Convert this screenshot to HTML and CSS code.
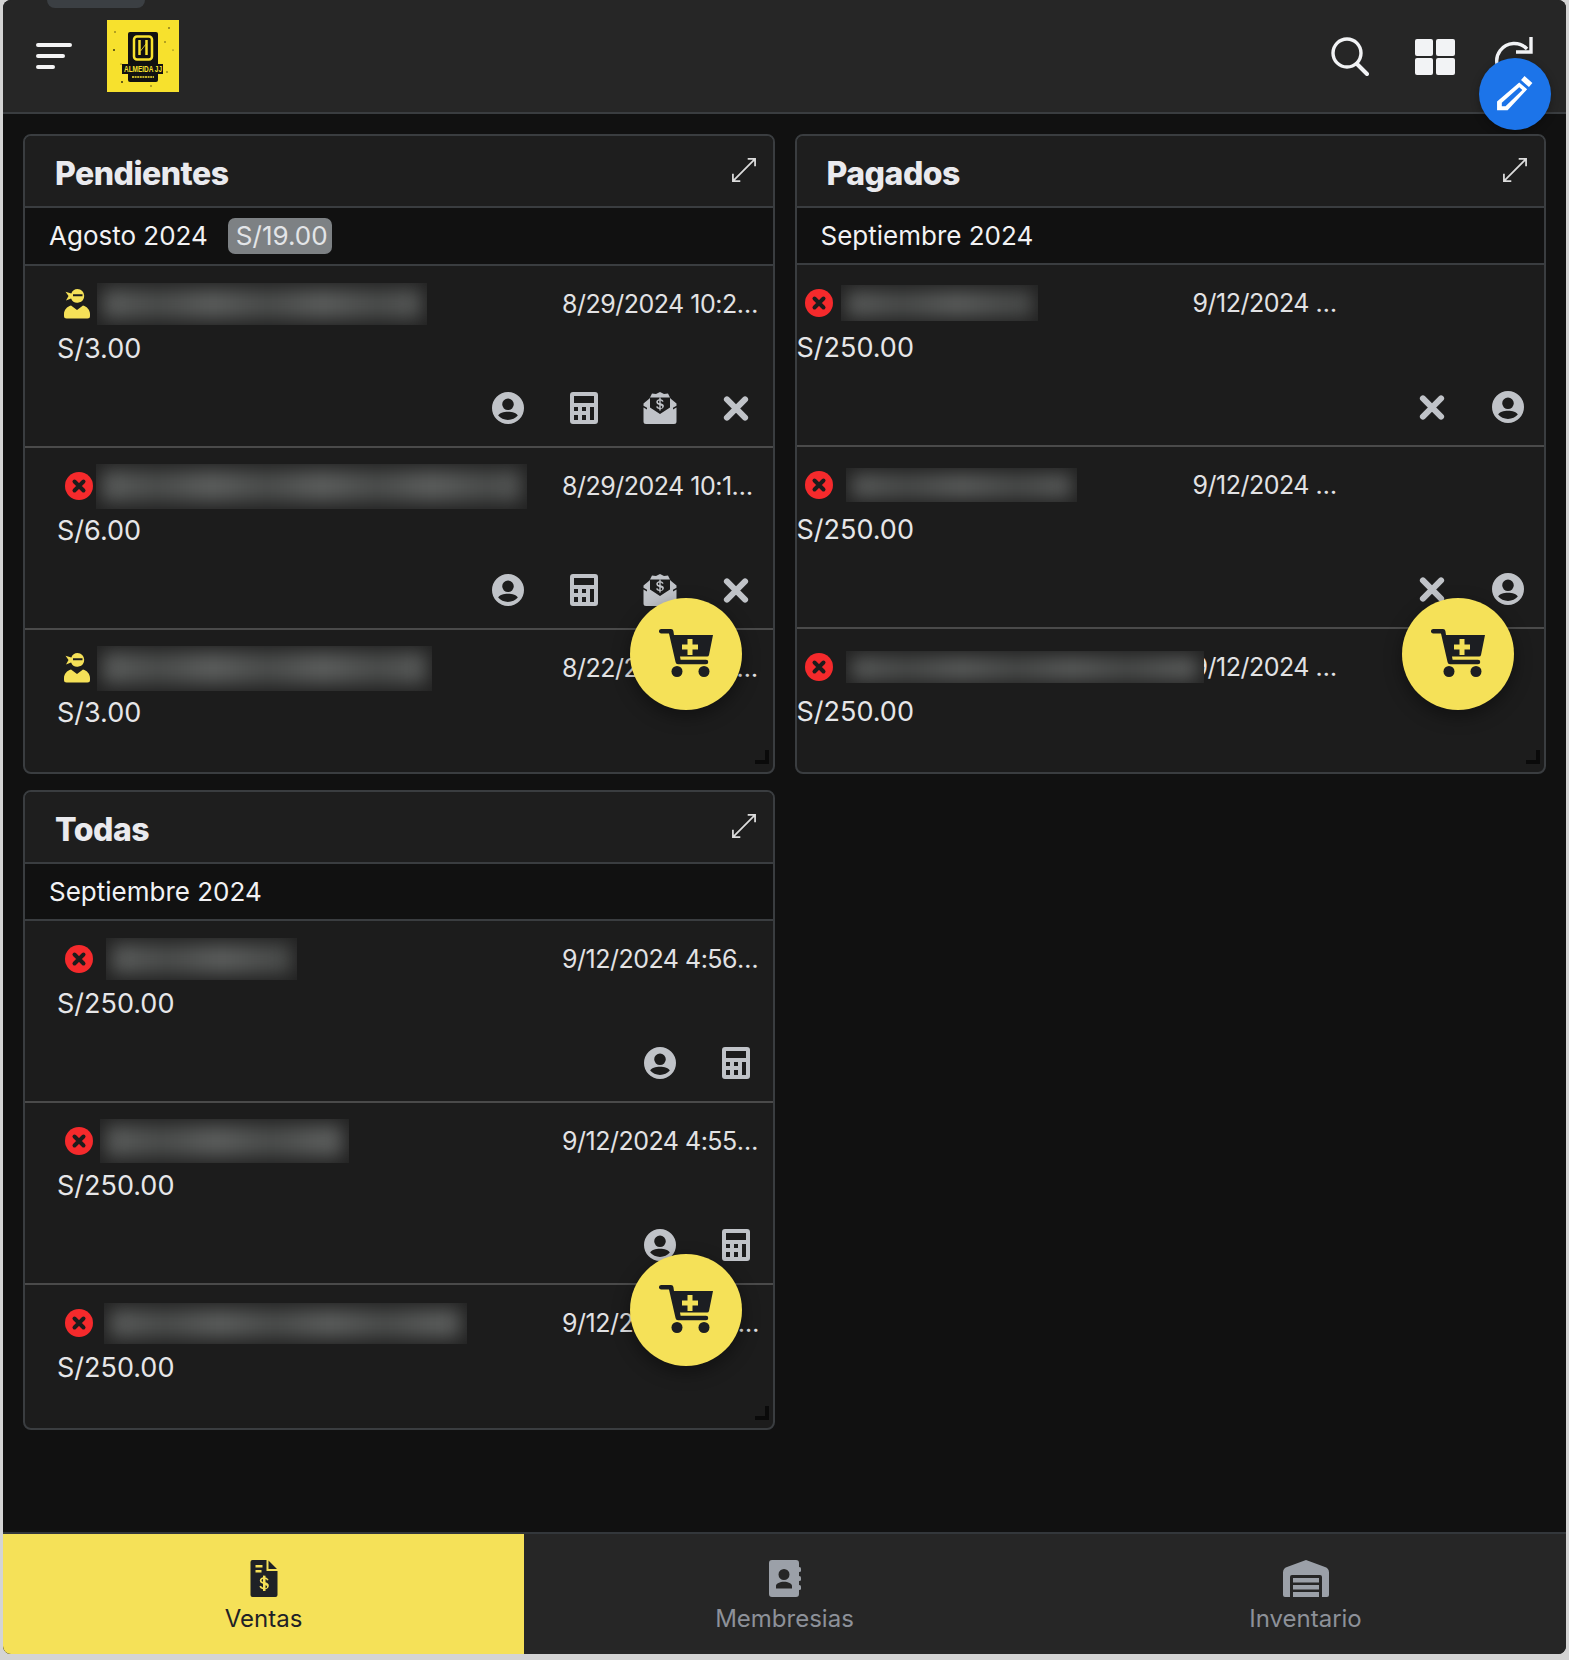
FILE: index.html
```html
<!DOCTYPE html>
<html lang="es">
<head>
  <meta charset="UTF-8" />
  <meta name="viewport" content="width=device-width, initial-scale=1.0"/>
  <title>Almeida JJ - Ventas</title>
  <link rel="stylesheet" href="styles.css">
</head>
<body>

<!-- shared icons -->
<svg class="defs" width="0" height="0">
  <symbol id="i-person" viewBox="0 0 32 32">
    <path fill-rule="evenodd" d="M16 0a16 16 0 1 0 0 32a16 16 0 0 0 0-32zM16 6.500a5.800 5.800 0 1 1 0 11.600a5.800 5.800 0 0 1 0-11.600zM16 28c-4 0-7.600-1.700-9.800-4.400c.8-2.300 5.500-3.800 9.800-3.800s9 1.500 9.800 3.800C23.600 26.300 20 28 16 28z"/>
  </symbol>
  <symbol id="i-calc" viewBox="0 0 28 32">
    <path fill-rule="evenodd" d="M3 0h22a3 3 0 0 1 3 3v26a3 3 0 0 1-3 3H3a3 3 0 0 1-3-3V3a3 3 0 0 1 3-3zM4 4v7h20V4zM4 15v4h4v-4zM12 15v4h4v-4zM20 15v13h4V15zM4 23v5h4v-5zM12 23v5h4v-5z"/>
  </symbol>
  <symbol id="i-cash" viewBox="0 0 33 32">
    <path fill-rule="evenodd" d="M8.500 1.500L12.500 2L16.500 0L20.500 2L24.500 1.500L27 6.500L33 11.500V29.500A2.500 2.500 0 0 1 30.500 32H2.500A2.500 2.500 0 0 1 0 29.500V11.500L6 6.500zM6.500 5.500V15.500L16.500 22L26.500 15.500V5.500zM15.800 5.800v1.500c-1.900.3-3 1.300-3 2.800c0 1.700 1.300 2.400 3 2.800v2.800c-.9-.2-1.500-.7-1.700-1.500l-1.500.4c.3 1.400 1.500 2.300 3.200 2.500v1.500h1.400v-1.500c2-.3 3.200-1.400 3.200-3c0-1.700-1.300-2.500-3.200-2.900V8.600c.7.100 1.200.6 1.400 1.200l1.500-.4c-.3-1.200-1.400-2-2.900-2.200V5.800zM15.800 8.600v2.500c-.9-.3-1.400-.6-1.400-1.200s.5-1.100 1.400-1.300zM17.200 13.500c1 .3 1.600.7 1.600 1.400s-.6 1.200-1.600 1.300zM0 13.800V15.500L3.500 17.500V15.800zM33 13.800V15.500L29.500 17.500V15.800z"/>
  </symbol>
  <symbol id="i-close" viewBox="0 0 24 24">
    <path d="M4.500 4.500L19.500 19.500M19.500 4.500L4.500 19.500" fill="none" stroke="currentColor" stroke-width="5" stroke-linecap="round"/>
  </symbol>
  <symbol id="i-cancel" viewBox="0 0 28 28">
    <circle cx="14" cy="14" r="14" fill="#f52a2c"/>
    <path d="M9.500 9.500L18.500 18.500M18.500 9.500L9.500 18.500" fill="none" stroke="#1c1c1c" stroke-width="4" stroke-linecap="round"/>
  </symbol>
  <symbol id="i-ninja" viewBox="0 0 26 30">
    <path fill-rule="evenodd" d="M13.500 0a6.800 6.800 0 0 1 6.700 6.800a6.800 6.800 0 0 1-13.100 2.600L2 11.500L4.500 7L1.500 2.800L7.300 4.400A6.800 6.800 0 0 1 13.500 0zM9 5.300v2h9.500v-2z"/>
    <path d="M7 16.500L13 21L19 16.500C23 17.500 26 21 26 25V27a2.500 2.500 0 0 1-2.500 2.500H2.500A2.500 2.500 0 0 1 0 27V25C0 21 3 17.500 7 16.500z"/>
  </symbol>
  <symbol id="i-expand" viewBox="0 0 26 26">
    <path d="M25 1L1 25M17 1H25V9M1 17V25H9" fill="none" stroke="currentColor" stroke-width="1.900"/>
  </symbol>
  <symbol id="i-cart" viewBox="0 0 54 50">
    <path fill-rule="evenodd" d="M2.200 0H12a2.500 2.500 0 0 1 2.400 2L15 6H54L50 26a2 2 0 0 1-2 1.500H21L21.600 30.700H47a2.250 2.250 0 0 1 0 4.500H19a2.500 2.500 0 0 1-2.400-2L10 4.500H2.200a2.250 2.250 0 0 1 0-4.500zM28.500 10v5.500H23v5h5.500v5.500h5v-5.500H39v-5h-5.500V10z"/>
    <circle cx="18" cy="42.500" r="5.500"/>
    <circle cx="45" cy="42.500" r="5.500"/>
  </symbol>
</svg>

<div class="app">

  <div class="notch"></div>

  <nav class="topbar">
    <svg class="menu-icon" viewBox="0 0 36 26">
      <path d="M2 2H34M2 13H27M2 24H17" fill="none" stroke="#f4f4f5" stroke-width="4" stroke-linecap="round"/>
    </svg>
    <svg class="logo" viewBox="0 0 72 72">
      <rect width="72" height="72" fill="#f7e12d"/>
      <g fill="#3a3410">
        <circle cx="8" cy="12" r=".7"/><circle cx="62" cy="8" r=".8"/><circle cx="7" cy="30" r="1"/>
        <circle cx="15" cy="62" r="1"/><circle cx="60" cy="52" r=".7"/><circle cx="66" cy="30" r=".6"/>
        <circle cx="14" cy="44" r=".6"/><circle cx="44" cy="66" r=".7"/><circle cx="58" cy="22" r=".7"/>
      </g>
      <rect x="21" y="12" width="30" height="50" rx="2" fill="#111"/>
      <rect x="27" y="16.500" width="18" height="23" rx="3" fill="none" stroke="#f7e12d" stroke-width="2.500"/>
      <path d="M32.500 20V35M39.500 20V35" stroke="#f7e12d" stroke-width="2.500"/>
      <path d="M33.500 31L39 24" stroke="#f7e12d" stroke-width=".8"/>
      <rect x="15" y="44" width="41" height="10" fill="#111"/>
      <text class="logo-text" x="36" y="52" textLength="38" lengthAdjust="spacingAndGlyphs">ALMEIDA JJ</text>
      <path d="M25 57H47" stroke="#f7e12d" stroke-width="1.500" stroke-dasharray="2 .6"/>
    </svg>
    <div class="topbar-actions">
      <svg class="tool search" viewBox="0 0 38 40">
        <circle cx="16" cy="16" r="14" fill="none" stroke="#f2f3f5" stroke-width="3.400"/>
        <path d="M26 27L36 37" stroke="#f2f3f5" stroke-width="4" stroke-linecap="round"/>
      </svg>
      <div class="grid-icon">
        <span></span><span></span><span></span><span></span>
      </div>
      <svg class="tool refresh" viewBox="0 0 40 40">
        <path d="M33 13A17.500 17.500 0 1 0 37 30" fill="none" stroke="#f2f3f5" stroke-width="3.400"/>
        <path d="M37 1V16H22" fill="none" stroke="#f2f3f5" stroke-width="3.400"/>
      </svg>
    </div>
  </nav>

  <button class="fab-edit">
    <svg viewBox="0 0 36 36"><path fill-rule="evenodd" d="M27 1l7.500 6.500l-3.300 3.800l-7.500-6.500zM22 7l7.500 6.500L11 33.500H1V25zM22 11.500L5.500 26.200v3.300h3.500L25 14.200z" fill="#fff"/></svg>
  </button>

  <main class="board">

    <!-- Pendientes -->
    <section class="card">
      <header class="card-head">
        <h2>Pendientes</h2>
        <svg class="expand"><use href="#i-expand"/></svg>
      </header>
      <div class="month">Agosto 2024 <span class="pill">S/19.00</span></div>
      <div class="list">
        <article class="sale">
          <div class="sale-top">
            <span class="status"><svg class="ninja"><use href="#i-ninja"/></svg></span>
            <span class="name"><span class="smear" style="width:330px;height:42px;margin-left:24px"><i></i></span></span>
            <span class="date">8/29/2024 10:29:14 PM</span>
          </div>
          <p class="amount">S/3.00</p>
          <div class="actions">
            <svg class="act person"><use href="#i-person"/></svg>
            <svg class="act calc"><use href="#i-calc"/></svg>
            <svg class="act cash"><use href="#i-cash"/></svg>
            <svg class="act close"><use href="#i-close"/></svg>
          </div>
        </article>
        <article class="sale">
          <div class="sale-top">
            <span class="status"><svg class="cancel"><use href="#i-cancel"/></svg></span>
            <span class="name"><span class="smear" style="width:431px;height:45px;margin-left:23px"><i></i></span></span>
            <span class="date">8/29/2024 10:19:05 PM</span>
          </div>
          <p class="amount">S/6.00</p>
          <div class="actions">
            <svg class="act person"><use href="#i-person"/></svg>
            <svg class="act calc"><use href="#i-calc"/></svg>
            <svg class="act cash"><use href="#i-cash"/></svg>
            <svg class="act close"><use href="#i-close"/></svg>
          </div>
        </article>
        <article class="sale">
          <div class="sale-top">
            <span class="status"><svg class="ninja"><use href="#i-ninja"/></svg></span>
            <span class="name"><span class="smear" style="width:335px;height:45px;margin-left:24px"><i></i></span></span>
            <span class="date">8/22/2024 10:29:14 PM</span>
          </div>
          <p class="amount">S/3.00</p>
        </article>
      </div>
      <button class="fab-cart"><svg><use href="#i-cart"/></svg></button>
      <span class="resize"></span>
    </section>

    <!-- Pagados -->
    <section class="card card-tight">
      <header class="card-head">
        <h2>Pagados</h2>
        <svg class="expand"><use href="#i-expand"/></svg>
      </header>
      <div class="month">Septiembre 2024</div>
      <div class="list">
        <article class="sale">
          <div class="sale-top">
            <span class="status"><svg class="cancel"><use href="#i-cancel"/></svg></span>
            <span class="name"><span class="smear" style="width:197px;height:36px"><i></i></span></span>
            <span class="date">9/12/2024 4:56:01 PM</span>
          </div>
          <p class="amount">S/250.00</p>
          <div class="actions">
            <svg class="act close"><use href="#i-close"/></svg>
            <svg class="act person"><use href="#i-person"/></svg>
          </div>
        </article>
        <article class="sale">
          <div class="sale-top">
            <span class="status"><svg class="cancel"><use href="#i-cancel"/></svg></span>
            <span class="name"><span class="smear" style="width:231px;height:34px;margin-left:5px"><i></i></span></span>
            <span class="date">9/12/2024 4:55:32 PM</span>
          </div>
          <p class="amount">S/250.00</p>
          <div class="actions">
            <svg class="act close"><use href="#i-close"/></svg>
            <svg class="act person"><use href="#i-person"/></svg>
          </div>
        </article>
        <article class="sale">
          <div class="sale-top">
            <span class="status"><svg class="cancel"><use href="#i-cancel"/></svg></span>
            <span class="name"><span class="smear" style="width:358px;height:32px;margin-left:5px"><i></i></span></span>
            <span class="date">9/12/2024 4:54:10 PM</span>
          </div>
          <p class="amount">S/250.00</p>
        </article>
      </div>
      <button class="fab-cart"><svg><use href="#i-cart"/></svg></button>
      <span class="resize"></span>
    </section>

    <!-- Todas -->
    <section class="card">
      <header class="card-head">
        <h2>Todas</h2>
        <svg class="expand"><use href="#i-expand"/></svg>
      </header>
      <div class="month">Septiembre 2024</div>
      <div class="list">
        <article class="sale">
          <div class="sale-top">
            <span class="status"><svg class="cancel"><use href="#i-cancel"/></svg></span>
            <span class="name"><span class="smear" style="width:191px;height:42px;margin-left:33px"><i></i></span></span>
            <span class="date">9/12/2024 4:56:01 PM</span>
          </div>
          <p class="amount">S/250.00</p>
          <div class="actions">
            <svg class="act person"><use href="#i-person"/></svg>
            <svg class="act calc"><use href="#i-calc"/></svg>
          </div>
        </article>
        <article class="sale">
          <div class="sale-top">
            <span class="status"><svg class="cancel"><use href="#i-cancel"/></svg></span>
            <span class="name"><span class="smear" style="width:249px;height:44px;margin-left:27px"><i></i></span></span>
            <span class="date">9/12/2024 4:55:32 PM</span>
          </div>
          <p class="amount">S/250.00</p>
          <div class="actions">
            <svg class="act person"><use href="#i-person"/></svg>
            <svg class="act calc"><use href="#i-calc"/></svg>
          </div>
        </article>
        <article class="sale">
          <div class="sale-top">
            <span class="status"><svg class="cancel"><use href="#i-cancel"/></svg></span>
            <span class="name"><span class="smear" style="width:363px;height:41px;margin-left:31px"><i></i></span></span>
            <span class="date">9/12/2024 4:54:10 PM</span>
          </div>
          <p class="amount">S/250.00</p>
        </article>
      </div>
      <button class="fab-cart"><svg><use href="#i-cart"/></svg></button>
      <span class="resize"></span>
    </section>

  </main>

  <footer class="tabs">
    <a class="tab active" href="#">
      <svg class="tab-icon" viewBox="0 0 27 37">
        <path fill-rule="evenodd" d="M2 0h14v11h11v24a2 2 0 0 1-2 2H2a2 2 0 0 1-2-2V2a2 2 0 0 1 2-2zM5 5v2.500h7V5zM5 10v2.500h6V10zM12.500 15.500v1.700c-2 .4-3.200 1.700-3.200 3.300c0 2 1.500 2.800 3.200 3.300v3.700c-1-.2-1.700-.8-2-1.700l-1.600.5c.4 1.600 1.700 2.600 3.600 2.900v1.800H15v-1.800c2.100-.4 3.300-1.700 3.300-3.500c0-2-1.500-2.900-3.300-3.400v-3.200c.8.200 1.300.7 1.500 1.400l1.600-.5c-.4-1.400-1.500-2.300-3.100-2.600v-1.700zM12.500 19v2.800c-1-.3-1.500-.7-1.500-1.400s.6-1.200 1.500-1.400zM15 25.200c1 .3 1.600.8 1.600 1.500s-.6 1.400-1.600 1.600zM18 .5L26.500 9H18z"/>
      </svg>
      Ventas
    </a>
    <a class="tab" href="#">
      <svg class="tab-icon" viewBox="0 0 32 37">
        <path fill-rule="evenodd" d="M3 0h24a3 3 0 0 1 3 3v31a3 3 0 0 1-3 3H3a3 3 0 0 1-3-3V3a3 3 0 0 1 3-3zM15 9a5.500 5.500 0 1 0 0 11a5.500 5.500 0 0 0 0-11zM7 28.500h16v-2.500c0-2.500-4-4.200-8-4.200s-8 1.700-8 4.200z"/>
        <rect x="29" y="7" width="3" height="5" rx="1.500"/><rect x="29" y="16" width="3" height="5" rx="1.500"/><rect x="29" y="25" width="3" height="5" rx="1.500"/>
      </svg>
      Membresias
    </a>
    <a class="tab" href="#">
      <svg class="tab-icon wide" viewBox="0 0 46 37">
        <path fill-rule="evenodd" d="M23 0L42 7a6 6 0 0 1 4 5.500V35a2 2 0 0 1-2 2H39V17a2 2 0 0 0-2-2H9a2 2 0 0 0-2 2V37H2a2 2 0 0 1-2-2V12.500A6 6 0 0 1 4 7z"/>
        <rect x="10" y="18" width="26" height="4.500"/><rect x="10" y="25" width="26" height="4.500"/><rect x="10" y="32" width="26" height="5"/>
      </svg>
      Inventario
    </a>
  </footer>

</div>

</body>
</html>
```

FILE: styles.css
```css
* { box-sizing: border-box; margin: 0; padding: 0; font-family: "Inter", "Liberation Sans", sans-serif; }
html, body { height: 100%; }
body { background-color: #d4d4d4; padding: 0 3px 6px 3px; overflow: hidden; }

.defs { position: absolute; }

.app {
  position: relative;
  height: 100%;
  display: flex;
  flex-direction: column;
  background-color: #111;
  color: #e8e8ea;
  border-radius: 8px;
  overflow: hidden;
}

.notch {
  position: absolute;
  top: 0;
  left: 44px;
  width: 98px;
  height: 8px;
  background-color: #3b3f43;
  border-radius: 0 0 8px 8px;
}

/* top bar */
.topbar {
  flex: none;
  height: 114px;
  display: flex;
  align-items: center;
  padding: 0 0 0 33px;
  background-color: #262626;
  border-bottom: 2px solid #3a3d40;
}
.menu-icon { width: 36px; height: 26px; margin-right: 35px; margin-top: -1px; }
.logo { width: 72px; height: 72px; }
.logo-text { font-size: 8.500px; font-weight: 700; text-anchor: middle; fill: #f7e12d; font-family: "Liberation Sans", sans-serif; }
.topbar-actions {
  margin-left: auto;
  display: flex;
  align-items: center;
  padding-right: 32px;
}
.tool.search { width: 38px; height: 40px; margin-top: 1px; margin-right: 46px; }
.tool.refresh { width: 40px; height: 40px; margin-top: -1px; margin-left: 39px; }
.grid-icon {
  width: 40px;
  height: 36px;
  margin-top: 1px;
  display: grid;
  grid-template-columns: 18px 19px;
  grid-template-rows: 17px 17px;
  gap: 2px 3px;
}
.grid-icon span { background-color: #f2f3f5; border-radius: 2px; }

.fab-edit {
  position: absolute;
  top: 58px;
  right: 15px;
  width: 72px;
  height: 72px;
  border: none;
  border-radius: 50%;
  background-color: #1c74e9;
  box-shadow: 0 3px 8px rgba(0,0,0,0.3);
  display: flex;
  align-items: center;
  justify-content: center;
}
.fab-edit svg { width: 38px; height: 38px; }

/* cards */
.board {
  flex: 1;
  padding: 20px;
  display: grid;
  grid-template-columns: 1fr 1fr;
  grid-auto-rows: 640px;
  gap: 16px 20px;
  align-content: start;
}
.card {
  position: relative;
  display: flex;
  flex-direction: column;
  background-color: #1c1c1c;
  border: 2px solid #3a3d40;
  border-radius: 8px;
  overflow: hidden;
}
.card-head {
  flex: none;
  height: 72px;
  padding: 4px 17px 0 30px;
  display: flex;
  align-items: center;
  justify-content: space-between;
  background-color: #1e1e1e;
  border-bottom: 2px solid #3a3d40;
}
.card-head h2 { font-size: 32px; font-weight: 800; color: #eaeaee; letter-spacing: -0.5px; }
.expand { width: 24px; height: 24px; color: #dcdcdc; margin-top: -6px; }

.month {
  flex: none;
  display: flex;
  align-items: center;
  gap: 20px;
  min-height: 57px;
  padding: 10px 0 10px 24px;
  font-size: 26px;
  line-height: 32px;
  color: #f2f2f4;
  background-color: #111;
  border-bottom: 2px solid #3a3d40;
}
.pill {
  height: 36px;
  padding: 0 4px 0 8px;
  line-height: 36px;
  color: #e3e5e8;
  background-color: #7d8184;
  border-radius: 7px;
}

.list { flex: 1; overflow: hidden; }
.sale {
  height: 182px;
  padding-top: 15px;
  border-bottom: 2px solid #4a4a4a;
}
.sale:last-child { border-bottom: none; }
.sale-top {
  height: 46px;
  display: flex;
  align-items: center;
  padding-left: 32px;
}
.status { flex: none; width: 40px; display: flex; justify-content: center; }
.cancel { width: 28px; height: 28px; margin-left: 4px; }
.ninja { width: 26px; height: 30px; fill: #f5e158; }
.name { flex: none; width: 465px; display: block; margin-left: -24px; }
.smear {
  position: relative;
  z-index: 1;
  display: block;
  overflow: hidden;
  background-color: #222;
}
.smear i {
  display: block;
  height: 72%;
  margin: 6px 6px;
  background: repeating-linear-gradient(90deg, #5c5e5d, #4a4c4b 55px, #5c5e5d 110px);
  filter: blur(9px);
}
.date {
  flex: 1;
  min-width: 0;
  margin-left: 24px;
  padding-right: 9px;
  font-size: 25px;
  letter-spacing: -0.5px;
  color: #e2e2e4;
  white-space: nowrap;
  overflow: hidden;
  text-overflow: ellipsis;
}
.amount { margin-top: 5px; padding-left: 32px; font-size: 27px; line-height: 34px; color: #e6e6e8; }
.actions {
  margin-top: 22px;
  height: 40px;
  display: flex;
  align-items: center;
  justify-content: flex-end;
  padding-right: 15px;
}
.act { flex: none; width: 44px; height: 32px; margin-left: 32px; fill: #c0c3c8; color: #c0c3c8; }
.act.close { height: 29px; }

.card-tight .sale-top { padding-left: 2px; }
.card-tight .status { width: 42px; }
.card-tight .cancel { margin-left: -2px; }
.card-tight .name { width: 352px; margin-left: 0; }
.card-tight .date { flex: none; width: 146px; margin-left: 0; padding-right: 0; }
.card-tight .amount { padding-left: 0; }
.card-tight .actions { padding-right: 14px; }
.card-tight .fab-cart { right: 30px; }

.fab-cart {
  position: absolute;
  right: 31px;
  bottom: 62px;
  width: 112px;
  height: 112px;
  border: none;
  border-radius: 50%;
  background-color: #f5e158;
  box-shadow: 0 6px 18px rgba(0,0,0,0.4);
  display: flex;
  align-items: center;
  justify-content: center;
  z-index: 2;
}
.fab-cart svg { width: 54px; height: 50px; fill: #1c1e22; margin-top: -1px; }

.resize {
  position: absolute;
  right: 4px;
  bottom: 8px;
  width: 14px;
  height: 14px;
  border-right: 4px solid #0a0a0a;
  border-bottom: 4px solid #0a0a0a;
}

/* bottom tabs */
.tabs {
  flex: none;
  height: 122px;
  display: grid;
  grid-template-columns: 1fr 1fr 1fr;
  background-color: #262626;
  border-top: 2px solid #33373b;
}
.tab {
  display: flex;
  flex-direction: column;
  align-items: center;
  padding-top: 26px;
  gap: 6px;
  font-size: 24px;
  line-height: 32px;
  text-decoration: none;
  color: #8d9199;
}
.tab.active { background-color: #f5e158; color: #1f2226; }
.tab-icon { width: 32px; height: 37px; fill: #9ba0a8; }
.tab-icon.wide { width: 46px; }
.tab.active .tab-icon { fill: #1f2226; }
```
